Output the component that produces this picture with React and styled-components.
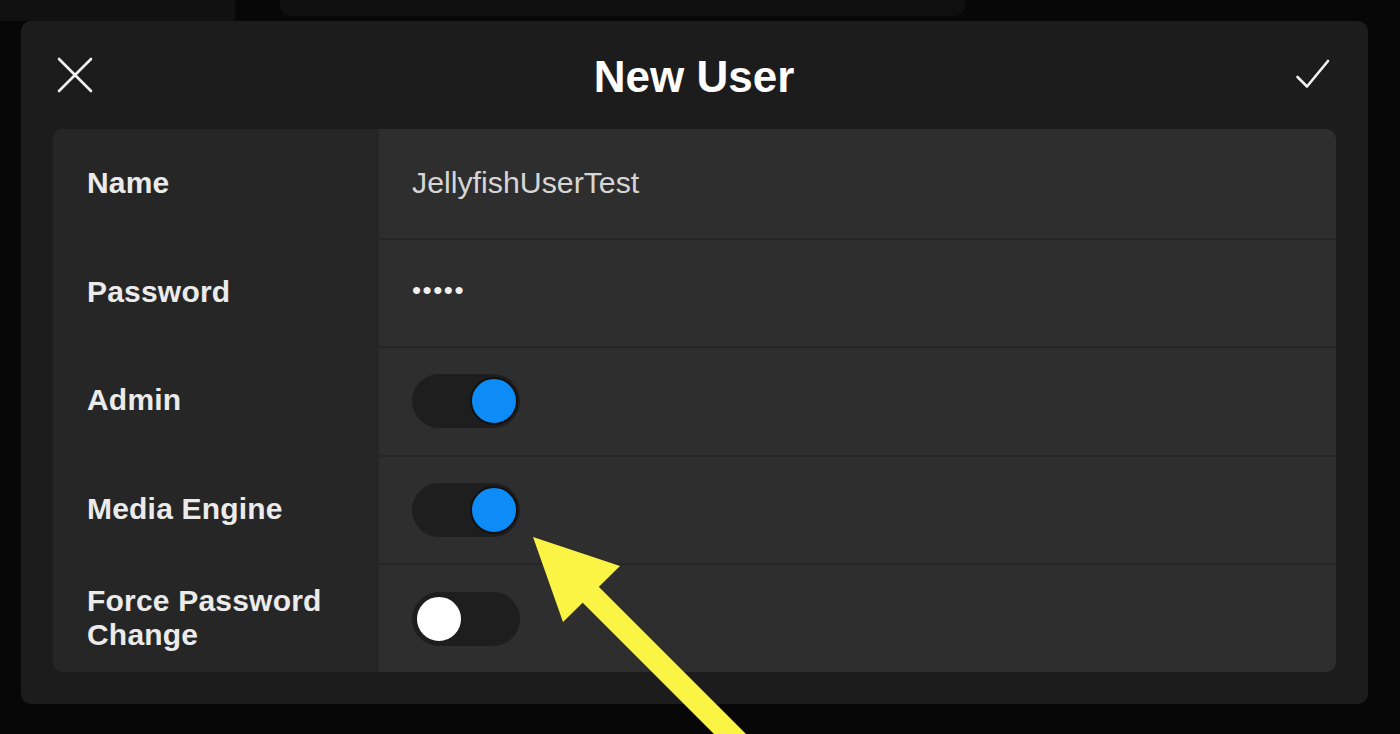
import React from 'react';
import styled, {createGlobalStyle} from 'styled-components';

const GlobalStyle = createGlobalStyle`
  body {
    margin: 0;
    background: #070707;
    font-family: "Liberation Sans", Arial, sans-serif;
  }
`;

const Page = styled.div`
  position: relative;
  width: 1400px;
  height: 734px;
  overflow: hidden;
`;

// screen behind the modal, only its top edge is visible
const Backdrop = styled.div`
  display: flex;
  height: 21px;
  .side {
    width: 235px;
    background: #111111;
  }
  .card {
    margin-left: 45px;
    width: 685px;
    height: 16px;
    background: #0f0f0f;
    border-radius: 0 0 10px 10px;
  }
`;

const Modal = styled.div`
  margin: 0 32px 0 21px;
  height: 683px;
  background: #1c1c1c;
  border-radius: 10px;
  padding: 0 32px;
  box-sizing: border-box;
  display: flex;
  flex-direction: column;
`;

const Header = styled.div`
  height: 108px;
  display: flex;
  align-items: center;
  justify-content: space-between;
  padding: 0 5px 0 4px;
  h1 {
    margin: 4px 0 0;
    color: #ffffff;
    font-size: 44px;
    font-weight: 700;
  }
`;

const IconButton = styled.button`
  width: 36px;
  height: 36px;
  padding: 0;
  border: none;
  background: none;
  display: flex;
  align-items: center;
  justify-content: center;
  svg {
    display: block;
  }
`;

const Panel = styled.div`
  height: 543px;
  border-radius: 10px;
  overflow: hidden;
  display: grid;
  grid-template-columns: 326px 1fr;
  grid-template-rows: repeat(5, 1fr);
  background: #2e2e2e;
`;

const Label = styled.div`
  background: #262626;
  display: flex;
  align-items: center;
  padding: 0 20px 0 34px;
  color: #ebebeb;
  font-size: 30px;
  font-weight: 700;
  line-height: 34px;
  letter-spacing: 0.2px;
`;

const Value = styled.div`
  display: flex;
  align-items: center;
  padding: 0 33px;
  color: #d6d6d6;
  font-size: 30.3px;
  border-top: ${(p) => (p.first ? 'none' : '2px solid #262626')};
`;

const Dots = styled.span`
  color: #f0f0f0;
  font-size: 26px;
  letter-spacing: 1.5px;
  transform: translateY(-2px);
`;

const Toggle = styled.div`
  width: 108px;
  height: 54px;
  border-radius: 27px;
  background: #1e1e1e;
  display: flex;
  align-items: center;
  justify-content: ${(p) => (p.on ? 'flex-end' : 'flex-start')};
  padding: 0 2px 0 3px;
  box-sizing: border-box;
`;

const Knob = styled.div`
  width: 48px;
  height: 48px;
  border-radius: 50%;
  box-sizing: border-box;
  background: ${(p) => (p.on ? '#0d8cf7' : '#ffffff')};
  border: 2px solid ${(p) => (p.on ? '#111111' : '#1e1e1e')};
`;

const Arrow = styled.svg`
  position: absolute;
  left: 0;
  top: 0;
  pointer-events: none;
`;

const rows = [
  {label: 'Name', text: 'JellyfishUserTest'},
  {label: 'Password', dots: true},
  {label: 'Admin', toggle: true},
  {label: 'Media Engine', toggle: true},
  {label: <>Force Password<br />Change</>, toggle: false},
];

const App = () => {
  return (
    <Page>
      <GlobalStyle />
      <Backdrop>
        <div className='side' />
        <div className='card' />
      </Backdrop>
      <Modal>
        <Header>
          <IconButton aria-label='close'>
            <svg width='36' height='36' viewBox='0 0 36 36'>
              <path d='M2 2 L34 34 M34 2 L2 34' stroke='#f2f2f2' strokeWidth='2.6' strokeLinecap='round' />
            </svg>
          </IconButton>
          <h1>New User</h1>
          <IconButton aria-label='save'>
            <svg width='36' height='36' viewBox='0 0 36 36'>
              <path d='M2.5 20 L12 29.5 L33 4' stroke='#f2f2f2' strokeWidth='2.6' fill='none' strokeLinecap='round' strokeLinejoin='round' />
            </svg>
          </IconButton>
        </Header>
        <Panel>
          {rows.map((r, i) => (
            <React.Fragment key={i}>
              <Label>{r.label}</Label>
              <Value first={i === 0}>
                {r.text}
                {r.dots && <Dots>•••••</Dots>}
                {r.toggle !== undefined && !r.dots && !r.text && (
                  <Toggle on={r.toggle}>
                    <Knob on={r.toggle} />
                  </Toggle>
                )}
              </Value>
            </React.Fragment>
          ))}
        </Panel>
      </Modal>
      <Arrow width='1400' height='734' viewBox='0 0 1400 734'>
        <polygon points='533,537 620,566 563,622' fill='#fbf444' />
        <polygon points='593,581 577,597 762,782 778,766' fill='#fbf444' />
      </Arrow>
    </Page>
  );
};

export default App;
